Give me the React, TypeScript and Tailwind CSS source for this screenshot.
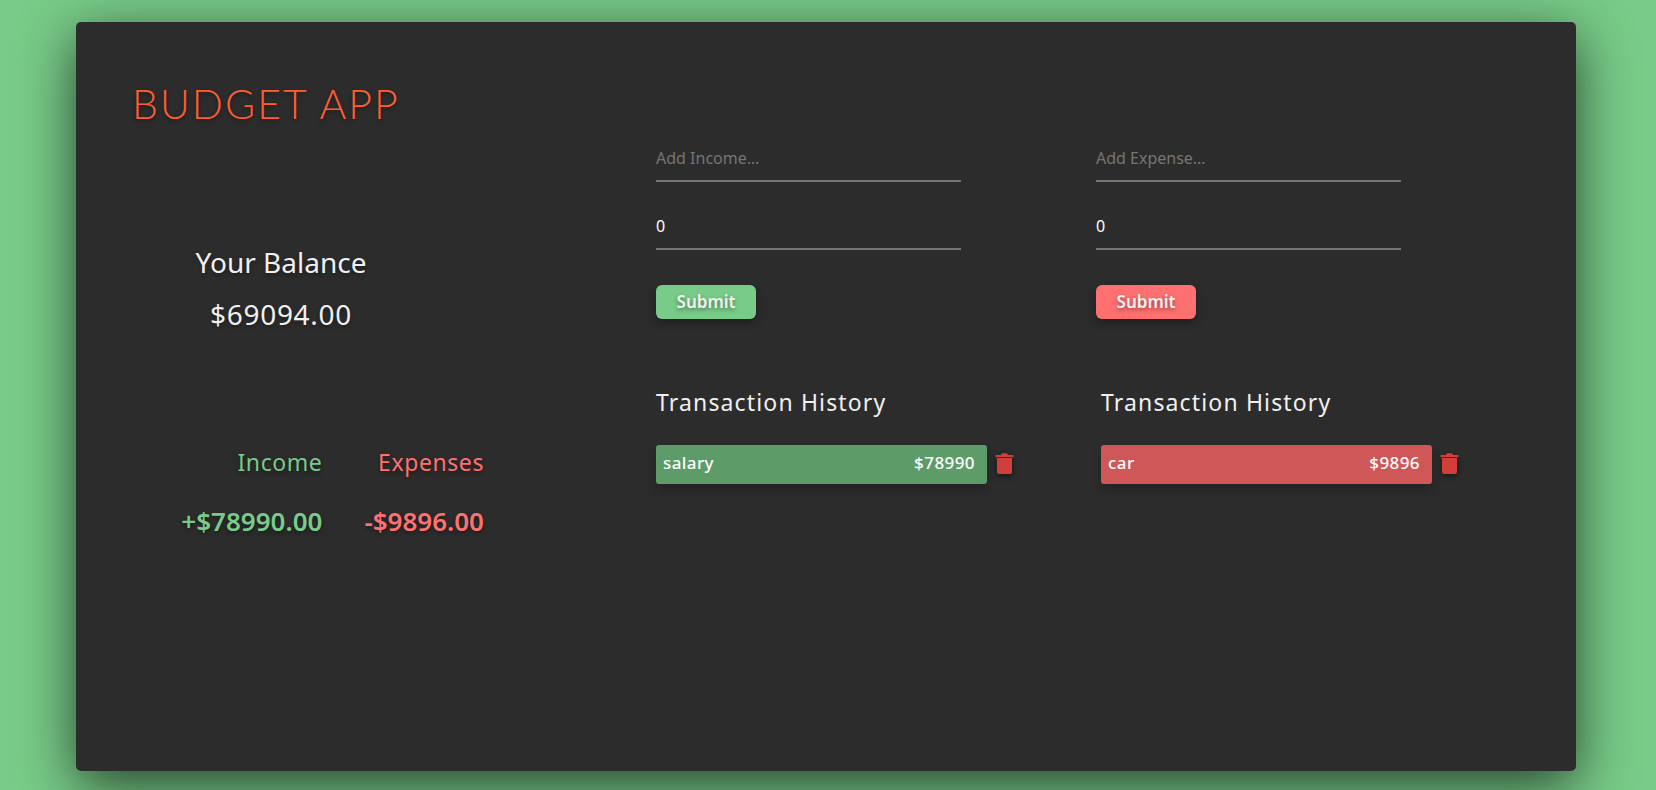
import { useState } from "react";

const INK_SHADOW = "[text-shadow:0_2px_4px_rgba(0,0,0,0.4)]";

function TrashIcon() {
  return (
    <svg viewBox="0 0 19 22" className="h-[22px] w-[19px] drop-shadow-[0_2px_3px_rgba(0,0,0,0.5)]" fill="#d23f3a" aria-hidden="true">
      <path d="M0.5 2 H5.8 L6.8 0.6 Q7.2 0.2 7.8 0.2 H11.2 Q11.8 0.2 12.2 0.6 L13.2 2 H18.5 V4.2 H0.5 Z" />
      <path d="M2 5 H17 V18.8 Q17 21 14.8 21 H4.2 Q2 21 2 18.8 Z" />
    </svg>
  );
}

type Kind = "income" | "expense";

function EntryForm({ kind }: { kind: Kind }) {
  const [name, setName] = useState("");
  const [amount, setAmount] = useState("0");
  const title = kind === "income" ? "Add Income…" : "Add Expense…";
  const field =
    "h-11 w-[305px] max-w-full border-b-2 border-[#757575] bg-transparent pb-[3px] text-base text-white outline-none placeholder:text-[#757575]";
  return (
    <form className="flex flex-col items-start gap-6" onSubmit={(e) => e.preventDefault()}>
      <input type="text" aria-label={title} placeholder={title} value={name} onChange={(e) => setName(e.target.value)} className={field} />
      <input type="text" inputMode="numeric" aria-label="Amount" value={amount} onChange={(e) => setAmount(e.target.value)} className={field} />
      <button
        type="submit"
        className={`mt-[11px] h-[34px] w-[100px] rounded-md text-[17px] font-semibold text-[#f0f0f0] shadow-[0_4px_10px_rgba(0,0,0,0.3)] ${INK_SHADOW} ${kind === "income" ? "bg-[#78cb88]" : "bg-[#ff7070]"}`}
      >
        Submit
      </button>
    </form>
  );
}

function History({ kind, name, amount }: { kind: Kind; name: string; amount: string }) {
  return (
    <section>
      <h2 className="text-[23px] leading-8 tracking-wider">Transaction History</h2>
      <ul className="mt-[27px]">
        <li className="flex items-center gap-2">
          <div
            className={`flex h-[39px] w-[331px] items-center justify-between rounded-[3px] pr-3 pb-1 pl-[7px] text-[17px] font-medium tracking-wide text-white shadow-[0_6px_10px_rgba(0,0,0,0.2)] ${kind === "income" ? "bg-[#5d9c69]" : "bg-[#cf5757]"}`}
          >
            <span>{name}</span>
            <span>{amount}</span>
          </div>
          <button type="button" aria-label={`Delete ${name}`} className="pb-[2px]">
            <TrashIcon />
          </button>
        </li>
      </ul>
    </section>
  );
}

export default function App() {
  return (
    <div className="min-h-screen overflow-hidden bg-[#78cb88] pt-[22px] pr-20 pb-[19px] pl-[76px] font-['Noto_Sans',sans-serif] text-[#f0f0f0]">
      <main className="mx-auto grid min-h-[749px] max-w-[1500px] grid-cols-[29fr_46fr] rounded-[5px] bg-[#2c2c2c] shadow-[0_15px_55px_rgba(0,0,0,0.67)]">
        <div className="pt-[54px]">
          <h1 className={`pl-14 font-['Lato',sans-serif] text-[41px] leading-[56px] font-light tracking-wider text-[#ff5c33] ${INK_SHADOW}`}>BUDGET APP</h1>
          <section className={`mt-[104px] w-[410px] text-center text-[28px] leading-[52px] ${INK_SHADOW}`}>
            <h2>Your Balance</h2>
            <p className="tracking-wide">$69094.00</p>
          </section>
          <dl className={`mt-[106px] flex w-[408px] justify-end gap-[42px] text-right ${INK_SHADOW}`}>
            <div className="text-[#78cb88]">
              <dt className="text-[23px] leading-8 tracking-wide">Income</dt>
              <dd className="mt-[25px] text-[26px] leading-9 font-semibold">+$78990.00</dd>
            </div>
            <div className="text-[#ff7070]">
              <dt className="text-[23px] leading-8 tracking-wide">Expenses</dt>
              <dd className="mt-[25px] text-[26px] leading-9 font-semibold">-$9896.00</dd>
            </div>
          </dl>
        </div>
        <div className="pt-[116px]">
          <div className="grid grid-cols-[22fr_24fr]">
            <EntryForm kind="income" />
            <EntryForm kind="expense" />
          </div>
          <div className="mt-[67px] grid grid-cols-[89fr_95fr]">
            <History kind="income" name="salary" amount="$78990" />
            <History kind="expense" name="car" amount="$9896" />
          </div>
        </div>
      </main>
    </div>
  );
}
